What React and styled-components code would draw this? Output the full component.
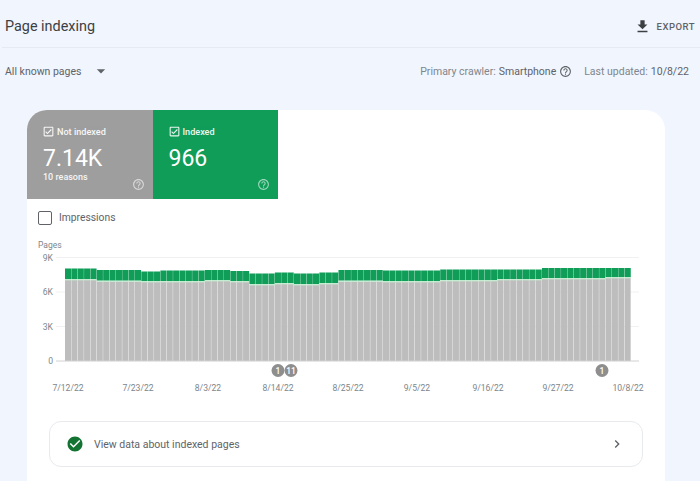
import React from 'react';
import styled, { createGlobalStyle } from 'styled-components';
import {
  MdArrowDropDown,
  MdCheckCircle,
  MdChevronRight,
  MdFileDownload,
  MdHelpOutline,
  MdOutlineCheckBox,
} from 'react-icons/md';

const GlobalStyle = createGlobalStyle`
  html, body {
    margin: 0;
    height: 100%;
    overflow: hidden;
    background: #f1f5fe;
    font-family: Roboto, "Liberation Sans", sans-serif;
  }
`;

const CHART_LEFT = 65;
const CHART_RIGHT = 631;
const BAR_COUNT = 89;
const BASELINE = 361;

// [end x, top of green, top of gray], read off the reference in page pixels
const segments = [
  [96, 268.5, 280],
  [141, 270, 281.5],
  [161, 271.5, 282],
  [205, 270.5, 282],
  [230, 270, 281],
  [249, 271, 282],
  [274, 273.5, 285],
  [294, 272.5, 284],
  [319, 273.5, 285],
  [338, 272.5, 284],
  [383, 270, 281.5],
  [440, 270.5, 282],
  [500, 269.5, 281],
  [541, 269.5, 280],
  [606, 268, 279],
  [632, 268, 278],
];

const step = (CHART_RIGHT - CHART_LEFT) / BAR_COUNT;
const bars = Array.from({ length: BAR_COUNT }, (_, i) => {
  const x = CHART_LEFT + i * step;
  const seg = segments.find((s) => x + step / 2 < s[0]) || segments[segments.length - 1];
  return { x, top: seg[1], gray: seg[2] };
});

const grid = [
  { label: '9K', y: 257.5 },
  { label: '6K', y: 292 },
  { label: '3K', y: 326.5 },
];

const dates = [
  ['7/12/22', 68],
  ['7/23/22', 138],
  ['8/3/22', 208],
  ['8/14/22', 278],
  ['8/25/22', 348],
  ['9/5/22', 417],
  ['9/16/22', 488],
  ['9/27/22', 558],
  ['10/8/22', 628],
];

const annotations = [
  ['1', 278],
  ['11', 291],
  ['1', 602],
];

function Chart() {
  return (
    <ChartSvg viewBox="27 236 638 164">
      <text x="38" y="248" fontSize="8.5" fill="#80868b">Pages</text>
      {grid.map((g) => (
        <g key={g.label}>
          <line x1="56" x2="639" y1={g.y} y2={g.y} stroke="#f1f1f1" />
          <text x="53" y={g.y + 3} fontSize="8.6" fill="#80868b" textAnchor="end">{g.label}</text>
        </g>
      ))}
      <text x="53" y={BASELINE + 3} fontSize="8.6" fill="#80868b" textAnchor="end">0</text>
      {bars.map((b) => (
        <g key={b.x}>
          <rect x={b.x} y={b.gray} width={step - 0.35} height={BASELINE - b.gray} fill="#bdbdbd" />
          <rect x={b.x} y={b.gray - 1} width={step - 0.1} height="1.4" fill="#c4ead0" />
          <rect x={b.x} y={b.top} width={step - 0.25} height={b.gray - 1 - b.top} fill="#0f9d58" />
        </g>
      ))}
      <line x1="56" x2="639" y1={BASELINE} y2={BASELINE} stroke="#d0d0d0" />
      {annotations.map(([label, x]) => (
        <g key={x}>
          <circle cx={x} cy="370.5" r="6.5" fill="#8e8e8e" />
          <text x={x} y="373.5" fontSize="8.5" fontWeight="500" fill="#fff" textAnchor="middle">{label}</text>
        </g>
      ))}
      {dates.map(([label, x]) => (
        <text key={label} x={x} y="391" fontSize="8.6" fill="#80868b" textAnchor="middle">{label}</text>
      ))}
    </ChartSvg>
  );
}

function MetricTab({ color, label, value, note }) {
  return (
    <Tab $color={color}>
      <TabLabel>
        <MdOutlineCheckBox size={13} />
        {label}
      </TabLabel>
      <TabValue>{value}</TabValue>
      {note && <TabNote>{note}</TabNote>}
      <TabHelp>
        <MdHelpOutline size={13} />
      </TabHelp>
    </Tab>
  );
}

export default function App() {
  return (
    <Page>
      <GlobalStyle />
      <Header>
        <Title>Page indexing</Title>
        <ExportButton>
          <MdFileDownload size={17} color="#3c4043" />
          EXPORT
        </ExportButton>
      </Header>
      <FilterRow>
        <FilterSelect>
          All known pages
          <MdArrowDropDown size={20} color="#5f6368" />
        </FilterSelect>
        <Meta>
          <MetaItem>
            Primary crawler: <strong>Smartphone</strong>
            <MdHelpOutline size={13} color="#5f6368" />
          </MetaItem>
          <MetaItem>
            Last updated: <strong>10/8/22</strong>
          </MetaItem>
        </Meta>
      </FilterRow>
      <Card>
        <Tabs>
          <MetricTab color="#9e9e9e" label="Not indexed" value="7.14K" note="10 reasons" />
          <MetricTab color="#0f9d58" label="Indexed" value="966" />
        </Tabs>
        <ImpressionsRow>
          <EmptyBox />
          Impressions
        </ImpressionsRow>
        <Chart />
        <LinkRow>
          <MdCheckCircle size={18} color="#137333" />
          <LinkText>View data about indexed pages</LinkText>
          <MdChevronRight size={16} color="#5f6368" />
        </LinkRow>
      </Card>
    </Page>
  );
}

const Page = styled.div`
  width: 700px;
  height: 481px;
  overflow: hidden;
`;

const Header = styled.header`
  height: 48px;
  margin-left: 2px;
  padding: 5px 5px 0 3px;
  box-sizing: border-box;
  display: flex;
  align-items: center;
  justify-content: space-between;
  border-bottom: 1px solid #e6eaf2;
`;

const Title = styled.h1`
  margin: 0;
  font-size: 14.4px;
  font-weight: 400;
  color: #3c4043;
`;

const ExportButton = styled.div`
  display: flex;
  align-items: center;
  gap: 6px;
  font-size: 9.5px;
  font-weight: 500;
  letter-spacing: 0.5px;
  color: #5f6368;
`;

const FilterRow = styled.div`
  height: 46px;
  padding: 0 11px 0 5px;
  display: flex;
  align-items: center;
  justify-content: space-between;
`;

const FilterSelect = styled.div`
  display: flex;
  align-items: center;
  gap: 10px;
  font-size: 10.5px;
  color: #5f6368;
`;

const Meta = styled.div`
  display: flex;
  gap: 12px;
  font-size: 10.5px;
  color: #80868b;

  strong {
    font-weight: 400;
    color: #5f6368;
  }
`;

const MetaItem = styled.div`
  display: flex;
  align-items: center;
  gap: 3px;
`;

const Card = styled.main`
  width: 638px;
  height: 400px;
  margin: 16px 0 0 27px;
  padding-bottom: 20px;
  box-sizing: border-box;
  background: #fff;
  border-radius: 20px 20px 0 0;
  overflow: hidden;
`;

const Tabs = styled.div`
  display: flex;
`;

const Tab = styled.div`
  position: relative;
  width: 125.5px;
  height: 89px;
  padding: 15px 0 0 16px;
  box-sizing: border-box;
  background: ${(p) => p.$color};
  color: #fff;
`;

const TabLabel = styled.div`
  display: flex;
  align-items: center;
  gap: 2px;
  margin-left: -1px;
  font-size: 9.1px;
  font-weight: 500;
  opacity: 0.92;
`;

const TabValue = styled.div`
  margin-top: 6px;
  font-size: 23px;
  line-height: 29px;
`;

const TabNote = styled.div`
  margin-top: -1px;
  font-size: 9px;
  font-weight: 500;
  opacity: 0.9;
`;

const TabHelp = styled.div`
  position: absolute;
  right: 8px;
  bottom: 8px;
  line-height: 0;
  opacity: 0.6;
`;

const ImpressionsRow = styled.div`
  height: 37px;
  padding-left: 11px;
  display: flex;
  align-items: center;
  gap: 7px;
  font-size: 10.3px;
  color: #5f6368;
`;

const EmptyBox = styled.span`
  width: 12px;
  height: 12px;
  border: 1.5px solid #5f6368;
  border-radius: 2px;
`;

const ChartSvg = styled.svg`
  display: block;
  width: 638px;
  height: 164px;
  font-family: Roboto, "Liberation Sans", sans-serif;
`;

const LinkRow = styled.div`
  height: 46px;
  margin: 21px 22px 0;
  padding: 0 17px 0 16px;
  box-sizing: border-box;
  display: flex;
  align-items: center;
  gap: 10px;
  border: 1px solid #e8eaed;
  border-radius: 12px;
`;

const LinkText = styled.span`
  flex: 1;
  font-size: 10.5px;
  color: #5f6368;
`;
